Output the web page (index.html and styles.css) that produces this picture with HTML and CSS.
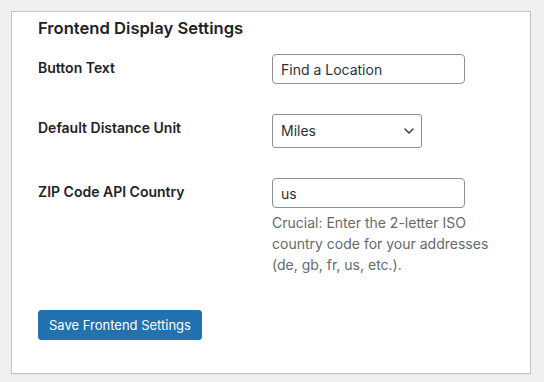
FILE: index.html
```html
<!DOCTYPE html>
<html lang="en">
<head>
    <meta charset="UTF-8">
    <meta name="viewport" content="width=device-width, initial-scale=1.0">
    <title>Frontend Display Settings</title>
    <link rel="stylesheet" href="styles.css">
</head>
<body>

    <div class="card">
        <h2>Frontend Display Settings</h2>

        <form>
            <table class="form-table">
                <tbody>
                    <tr>
                        <th><label for="buttonText">Button Text</label></th>
                        <td><input type="text" id="buttonText" class="regular-text" value="Find a Location"></td>
                    </tr>
                    <tr>
                        <th><label for="distanceUnit">Default Distance Unit</label></th>
                        <td>
                            <div class="select-wrap">
                                <select id="distanceUnit">
                                    <option selected>Miles</option>
                                    <option>Kilometers</option>
                                </select>
                                <svg class="chevron" width="10" height="6" viewBox="0 0 10 6">
                                    <path d="M1 1l4 4 4-4" fill="none" stroke="#3c434a" stroke-width="1.5" stroke-linecap="round" stroke-linejoin="round"/>
                                </svg>
                            </div>
                        </td>
                    </tr>
                    <tr>
                        <th><label for="zipCountry">ZIP Code API Country</label></th>
                        <td>
                            <input type="text" id="zipCountry" class="regular-text" value="us">
                            <p class="description">Crucial: Enter the 2-letter ISO country code for your addresses (de, gb, fr, us, etc.).</p>
                        </td>
                    </tr>
                </tbody>
            </table>

            <p class="submit">
                <button type="button" class="button-primary">Save Frontend Settings</button>
            </p>
        </form>
    </div>

</body>
</html>
```

FILE: styles.css
```css
body {
    margin: 0;
    padding: 11px;
    background: #f0f0f1;
    color: #1d2327;
    font-family: Inter, "Noto Sans", "Liberation Sans", sans-serif;
    font-size: 14px;
}
.card {
    box-sizing: border-box;
    width: 520px;
    padding: 5px 26px 33px;
    background: #fff;
    border: 1px solid #c3c4c7;
    box-shadow: 0 1px 1px rgba(0, 0, 0, .04);
}
h2 {
    margin: 0;
    font-size: 16.6px;
    line-height: 22px;
    font-weight: 600;
    color: #1d2327;
}
.form-table {
    border-collapse: collapse;
    width: 100%;
}
.form-table th {
    width: 224px;
    padding: 20px 10px 20px 0;
    text-align: left;
    vertical-align: top;
    font-weight: 600;
    line-height: 1.3;
}
.form-table td {
    padding: 15px 10px 15px 0;
    vertical-align: top;
    line-height: 1.3;
}
.regular-text {
    display: block;
    box-sizing: border-box;
    width: 193px;
    height: 30px;
    margin: 0;
    padding: 0 8px;
    border: 1px solid #8c8f94;
    border-radius: 4px;
    font: inherit;
    font-size: 14px;
    color: #2c3338;
    background: #fff;
}
.select-wrap {
    position: relative;
    width: 150px;
}
.select-wrap select {
    display: block;
    box-sizing: border-box;
    width: 150px;
    height: 34px;
    margin: 0;
    padding: 0 24px 0 8px;
    border: 1px solid #8c8f94;
    border-radius: 3px;
    font: inherit;
    font-size: 14px;
    color: #2c3338;
    background: #fff;
    appearance: none;
    -webkit-appearance: none;
}
.chevron {
    position: absolute;
    right: 8px;
    top: 14px;
    pointer-events: none;
}
.description {
    margin: 4px 0 0;
    font-size: 14px;
    line-height: 1.5;
    color: #646970;
}
.submit {
    margin: 20px 0 0;
}
.button-primary {
    display: block;
    height: 30px;
    padding: 0 10px;
    border: 1px solid #2271b1;
    border-radius: 3px;
    background: #2271b1;
    color: #fff;
    font: inherit;
    font-size: 13px;
    cursor: pointer;
}
```
